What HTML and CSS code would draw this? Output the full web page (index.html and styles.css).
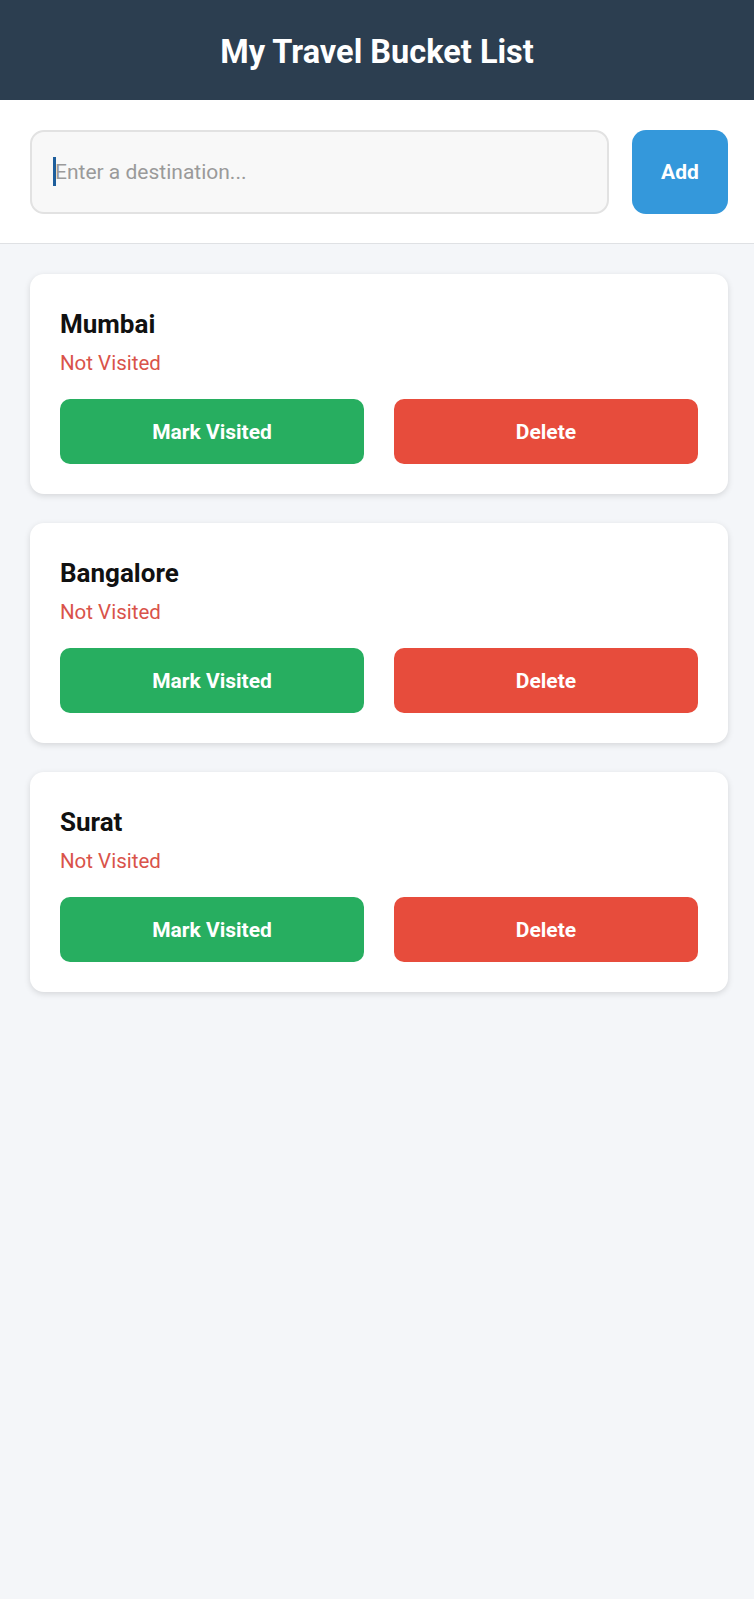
FILE: index.html
```html
<!DOCTYPE html>
<html lang="en">
<head>
<meta charset="utf-8">
<title>My Travel Bucket List</title>
<link rel="stylesheet" href="styles.css">
</head>
<body>
<header class="app-header">
  <h1 class="app-title">My Travel Bucket List</h1>
</header>
<section class="add-bar">
  <div class="input-wrap">
    <input class="dest-input" type="text" placeholder="Enter a destination...">
    <span class="caret"></span>
  </div>
  <button class="add-btn">Add</button>
</section>
<main class="list">
  <div class="card">
    <h3 class="card-title">Mumbai</h3>
    <p class="status">Not Visited</p>
    <div class="actions">
      <button class="btn btn-visit">Mark Visited</button>
      <button class="btn btn-delete">Delete</button>
    </div>
  </div>
  <div class="card">
    <h3 class="card-title">Bangalore</h3>
    <p class="status">Not Visited</p>
    <div class="actions">
      <button class="btn btn-visit">Mark Visited</button>
      <button class="btn btn-delete">Delete</button>
    </div>
  </div>
  <div class="card">
    <h3 class="card-title">Surat</h3>
    <p class="status">Not Visited</p>
    <div class="actions">
      <button class="btn btn-visit">Mark Visited</button>
      <button class="btn btn-delete">Delete</button>
    </div>
  </div>
</main>
</body>
</html>
```

FILE: styles.css
```css
* { box-sizing: border-box; }
html, body {
  margin: 0;
  padding: 0;
}
body {
  background: #f4f6f9;
  font-family: Roboto, "Liberation Sans", sans-serif;
  min-height: 1599px;
}
.app-header {
  height: 100px;
  background: #2c3e50;
  display: flex;
  align-items: center;
  justify-content: center;
}
.app-title {
  margin: 4px 0 0;
  color: #ffffff;
  font-size: 32.5px;
  font-weight: 700;
}
.add-bar {
  background: #ffffff;
  display: flex;
  gap: 23px;
  padding: 30px 26px 29px 30px;
  border-bottom: 1px solid #dfe1e4;
}
.input-wrap {
  flex: 1;
  position: relative;
}
.dest-input {
  width: 100%;
  height: 84px;
  border: 2px solid #e2e2e2;
  border-radius: 14px;
  background: #f8f8f8;
  padding: 0 22px 0 23px;
  font-family: Roboto, "Liberation Sans", sans-serif;
  font-size: 21px;
  color: #333;
  outline: none;
}
.dest-input::placeholder { color: #9a9a9a; }
.caret {
  position: absolute;
  left: 23px;
  top: 27px;
  width: 3px;
  height: 29px;
  background: #1e5e9c;
}
.add-btn {
  width: 96px;
  height: 84px;
  border: none;
  border-radius: 14px;
  background: #3498db;
  color: #ffffff;
  font-family: Roboto, "Liberation Sans", sans-serif;
  font-size: 21px;
  font-weight: 700;
}
.list {
  display: flex;
  flex-direction: column;
  gap: 29px;
  padding: 30px 26px 30px 30px;
}
.card {
  background: #ffffff;
  border-radius: 14px;
  padding: 30px;
  box-shadow: 0 2px 6px rgba(0, 0, 0, 0.13);
}
.card-title {
  margin: 0;
  font-size: 26px;
  line-height: 40px;
  font-weight: 700;
  color: #111;
}
.status {
  margin: 0;
  font-size: 20.5px;
  line-height: 38px;
  color: #d9534a;
}
.actions {
  margin-top: 17px;
  display: grid;
  grid-template-columns: 1fr 1fr;
  gap: 30px;
}
.btn {
  height: 65px;
  border: none;
  border-radius: 10px;
  color: #ffffff;
  font-family: Roboto, "Liberation Sans", sans-serif;
  font-size: 21px;
  font-weight: 700;
}
.btn-visit { background: #27ae60; }
.btn-delete { background: #e74c3c; }
```
